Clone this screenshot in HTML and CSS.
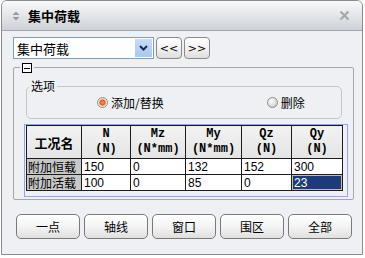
FILE: index.html
```html
<!DOCTYPE html>
<html>
<head>
<meta name="viewport" content="width=device-width, initial-scale=1">
<link rel="stylesheet" href="styles.css">
</head>
<body>

<div class="win">
  <div class="titlebar">
    <svg class="grip" width="8" height="10" viewBox="0 0 8 10">
      <path d="M4 0.5 L7.5 4 L0.5 4 Z" fill="#9a9a9a"/>
      <path d="M4 9.5 L7.5 6 L0.5 6 Z" fill="#9a9a9a"/>
    </svg>
    <span class="title">集中荷载</span>
    <svg class="close" width="11" height="11" viewBox="0 0 11 11">
      <path d="M1.5 1.5 L9.5 9.5 M9.5 1.5 L1.5 9.5" stroke="#a8a8a8" stroke-width="2.2"/>
    </svg>
  </div>

  <div class="body">
    <div class="toprow">
      <div class="combo">
        <span class="combo-text">集中荷载</span>
        <span class="drop">
          <svg width="9" height="6" viewBox="0 0 9 6"><path d="M1 1 L4.5 4.5 L8 1" stroke="#1a2a5a" stroke-width="2" fill="none"/></svg>
        </span>
      </div>
      <button class="nav">&lt;&lt;</button>
      <button class="nav">&gt;&gt;</button>
    </div>

    <div class="group">
      <span class="collapse"></span>

      <fieldset class="opts">
        <legend>选项</legend>
        <div class="radios">
          <span class="radio on"><span class="dot"></span>添加/替换</span>
          <span class="radio"><span class="dot"></span>删除</span>
        </div>
      </fieldset>

      <div class="grid">
        <table>
          <colgroup>
            <col class="c0"><col class="c1"><col class="c2"><col class="c3"><col class="c4"><col class="c5">
          </colgroup>
          <tr class="head">
            <th class="name">工况名</th>
            <th>N<br>(N)</th>
            <th>Mz<br>(N*mm)</th>
            <th>My<br>(N*mm)</th>
            <th>Qz<br>(N)</th>
            <th>Qy<br>(N)</th>
          </tr>
          <tr>
            <td class="rowname">附加恒载</td><td>150</td><td>0</td><td>132</td><td>152</td><td>300</td>
          </tr>
          <tr>
            <td class="rowname">附加活载</td><td>100</td><td>0</td><td>85</td><td>0</td><td class="sel">23</td>
          </tr>
        </table>
      </div>
    </div>

    <div class="btns">
      <button class="btn">一点</button>
      <button class="btn">轴线</button>
      <button class="btn">窗口</button>
      <button class="btn">围区</button>
      <button class="btn">全部</button>
    </div>
  </div>
</div>

</body>
</html>
```

FILE: styles.css
```css
body {
  margin: 0;
  background: #ffffff;
  font-family: "Noto Sans CJK SC", sans-serif;
  font-size: 12px;
}

.win {
  margin-left: 1px;
  width: 360px;
  height: 253px;
  border: 1px solid #8c8c8c;
  border-radius: 6px 6px 0 0;
  background: #eff0f3;
  overflow: hidden;
}

.titlebar {
  height: 29px;
  border-bottom: 1px solid #a4a8ae;
  background: linear-gradient(#f7f8f9, #e6e8eb 45%, #cdd1d7);
  display: flex;
  align-items: center;
  padding-left: 10px;
}

.grip {
  margin-right: 8px;
}

.title {
  font-weight: bold;
  font-size: 13px;
  color: #000;
}

.close {
  margin-left: auto;
  margin-right: 12px;
}

.body {
  padding: 6px 0 0 11px;
}

/* top row: combo + nav buttons */
.toprow {
  display: flex;
  height: 22px;
}

.combo {
  width: 139px;
  height: 20px;
  border: 1px solid #7f9db9;
  background: #fff;
  display: flex;
  align-items: center;
}

.combo-text {
  flex: 1;
  padding-left: 3px;
  font-size: 13px;
}

.drop {
  width: 17px;
  height: 18px;
  margin-right: 1px;
  background: linear-gradient(#c6dcf6, #a9c8ef);
  display: flex;
  align-items: center;
  justify-content: center;
}

.nav {
  margin: 0 0 0 2px;
  width: 26px;
  height: 22px;
  padding: 0;
  border: 1px solid #8a8a8a;
  border-radius: 4px;
  background: linear-gradient(#ffffff, #f2f2f2 50%, #dedede);
  font-family: "DejaVu Sans", sans-serif;
  font-size: 11px;
  color: #000;
}

/* collapsible group */
.group {
  position: relative;
  margin: 8px 0 0 0;
  padding: 0 0 2px 10px;
  border: 1px solid #a7a7a7;
  border-radius: 2px;
  box-sizing: border-box;
  width: 341px;
}

/* the toggle box sits over the top border */
.collapse {
  position: absolute;
  top: -5px;
  left: 8px;
  width: 10px;
  height: 10px;
  box-sizing: border-box;
  border: 1px solid #000;
  background: linear-gradient(#000, #000) center / 6px 1px no-repeat, #fff;
  box-shadow: 0 0 0 2px #eff0f3;
}

.opts {
  margin: 11px 0 0 2px;
  width: 316px;
  box-sizing: border-box;
  padding: 0 0 7px 0;
  border: 1px solid #c4c6ca;
  border-radius: 5px;
}

.opts > legend {
  padding: 0 2px;
  margin-left: 2px;
  font-size: 12px;
  line-height: 14px;
}

.radios {
  display: flex;
  height: 18px;
  align-items: center;
}

.radio {
  display: flex;
  align-items: center;
  font-size: 12px;
}

.radio:first-child {
  margin-left: 70px;
}

.radio + .radio {
  margin-left: 103px;
}

.dot {
  width: 11px;
  height: 11px;
  border-radius: 50%;
  margin-right: 3px;
  box-sizing: border-box;
  border: 1px solid #8e8f8f;
  background: radial-gradient(circle at 40% 35%, #ffffff, #d9d9d9 60%, #b0b0b0);
}

.radio.on .dot {
  background: radial-gradient(circle, #ff9a4a 0, #e9571a 2.5px, #f3c9aa 3.5px, #f4f4f4 4.5px, #d0d0d0);
}

/* grid */
.grid {
  margin: 5px 0 0 0;
  width: 324px;
  box-sizing: border-box;
  border: 1px solid #8fa6d8;
  padding: 0 4px 5px 1px;
}

table {
  border-collapse: collapse;
  width: 316px;
  table-layout: fixed;
  font-family: "Liberation Sans", sans-serif;
  font-size: 12px;
}

.c0 { width: 55px; }
.c1 { width: 49px; }
.c2 { width: 55px; }
.c3 { width: 56px; }
.c4 { width: 50px; }
.c5 { width: 51px; }

th {
  height: 32px;
  padding: 0;
  border: 1px solid #1c1c1c;
  background: linear-gradient(#f2f2f2, #e4e4e4);
  font-family: "Liberation Mono", monospace;
  font-size: 12px;
  font-weight: bold;
  line-height: 15px;
}

th.name {
  font-family: "Noto Sans CJK SC", sans-serif;
  font-size: 13px;
}

td {
  height: 15px;
  padding: 0 0 0 2px;
  border: 1px solid #1c1c1c;
  background: #fff;
  line-height: 14px;
}

td.rowname {
  padding: 0 0 0 1px;
  background: #c8c8c8;
  font-family: "Noto Sans CJK SC", sans-serif;
  font-size: 12px;
}

td.sel {
  background: #1d3a7c;
  color: #fff;
  box-shadow: inset 0 0 0 1px #cbbd95;
}

/* bottom buttons */
.btns {
  display: flex;
  gap: 4px;
  margin: 14px 0 0 3px;
}

.btn {
  width: 64px;
  height: 25px;
  padding: 0;
  border: 1px solid #7a7a7a;
  border-radius: 5px;
  background: linear-gradient(#ffffff, #f4f4f4 50%, #e0e0e0);
  font-family: "Noto Sans CJK SC", sans-serif;
  font-size: 12px;
  color: #000;
}
```
